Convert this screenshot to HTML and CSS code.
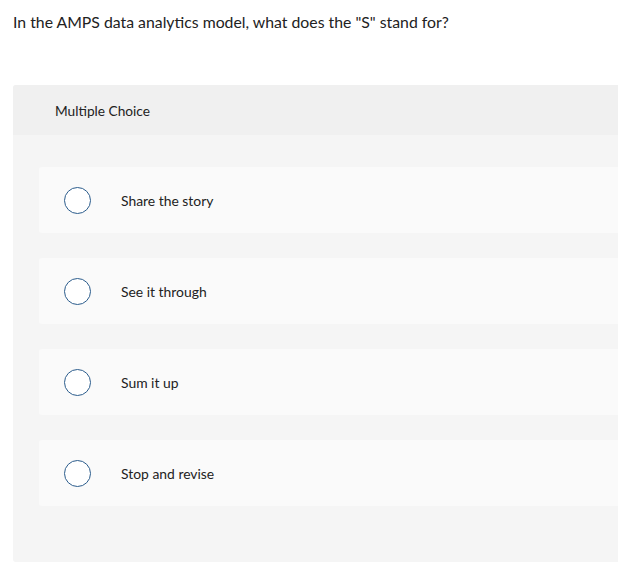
FILE: index.html
```html
<!DOCTYPE html>
<html>
<head>
<meta charset="utf-8">
<link rel="stylesheet" href="styles.css">
</head>
<body>
<div class="question">In the AMPS data analytics model, what does the "S" stand for?</div>
<div class="panel">
  <div class="panel-head">Multiple Choice</div>
  <div class="panel-body">
    <div class="option"><span class="radio"></span><span class="label">Share the story</span></div>
    <div class="option"><span class="radio"></span><span class="label">See it through</span></div>
    <div class="option"><span class="radio"></span><span class="label">Sum it up</span></div>
    <div class="option"><span class="radio"></span><span class="label">Stop and revise</span></div>
  </div>
</div>
</body>
</html>
```
FILE: styles.css
```css
html, body {
  margin: 0;
  padding: 0;
  background: #ffffff;
}
body {
  font-family: Lato, "Open Sans", Arial, sans-serif;
  color: #222;
  overflow: hidden;
}
.question {
  font-size: 15.8px;
  line-height: 20px;
  padding: 12px 0 0 13px;
  height: 85px;
  box-sizing: border-box;
}
.panel {
  margin-left: 13px;
  margin-right: -10px;
  background: #f5f5f5;
  border-radius: 3px;
}
.panel-head {
  background: #f0f0f0;
  height: 50px;
  display: flex;
  align-items: center;
  padding-left: 42px;
  font-size: 13.7px;
  border-radius: 3px 3px 0 0;
}
.panel-body {
  padding: 32px 0 56px 26px;
  display: flex;
  flex-direction: column;
  gap: 25px;
}
.option {
  background: #fafafa;
  height: 66px;
  border-radius: 3px;
  display: flex;
  align-items: center;
  padding-left: 25px;
}
.radio {
  width: 25px;
  height: 25px;
  border: 1.5px solid #2b5c8c;
  border-radius: 50%;
  background: #fff;
  flex: none;
}
.label {
  font-size: 13.9px;
  margin-left: 30px;
}
```
